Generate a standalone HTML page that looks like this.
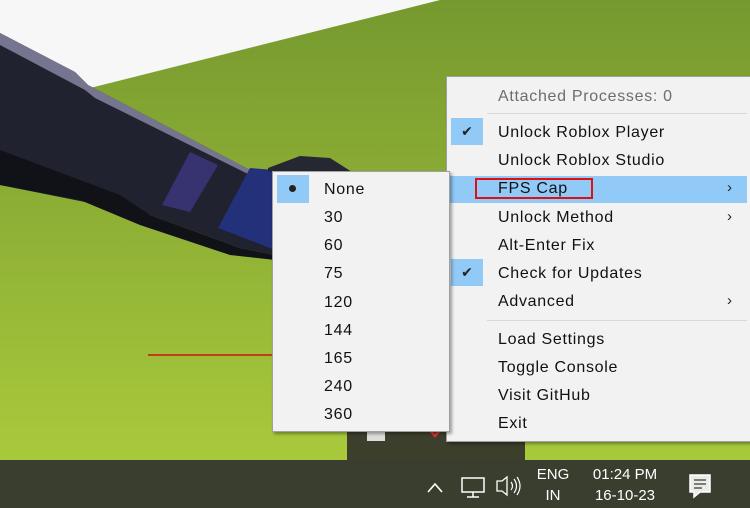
<!DOCTYPE html>
<html><head><style>
body{margin:0;width:750px;height:508px;overflow:hidden;position:relative;font-family:"Liberation Sans","DejaVu Sans",sans-serif;background:#f7f7f7}
.m{position:absolute;background:#f2f2f2;border:1px solid #a0a0a0;box-shadow:2px 2px 3px rgba(0,0,0,.35)}
.i{position:absolute;font-size:16px;letter-spacing:0.7px;color:#111;line-height:18px;margin-top:1px}
.hl{position:absolute;background:#91c9f7}
.sep{position:absolute;height:1px;background:#d8d8d8}
.ck{position:absolute;width:32px;height:27px;background:#91c9f7;color:#222;font-size:14px;text-align:center;line-height:27px}
.ar{position:absolute;font-size:15px;color:#222}
.tb{position:absolute;color:#fff;font-size:15px}
</style></head><body>
<svg width="750" height="508" style="position:absolute;left:0;top:0">
<defs><linearGradient id="g" x1="0" y1="0" x2="0" y2="1"><stop offset="0" stop-color="#76992f"/><stop offset="1" stop-color="#a9c93c"/></linearGradient></defs>
<polygon points="0,130 90,88 440,0 750,0 750,460 0,460" fill="url(#g)"/>
<polygon points="0,33 75,72 88,85 250,170 275,175 275,255 240,248 150,215 0,185" fill="#20222f"/>
<polygon points="0,33 75,72 88,85 250,170 250,175 95,98 85,90 0,45" fill="#757590"/>
<polygon points="0,150 120,195 150,215 240,248 275,255 275,260 230,255 140,225 80,200 0,185" fill="#111118"/>
<polygon points="190,152 218,165 190,212 162,205" fill="#363370"/>
<polygon points="250,168 275,170 275,250 218,228" fill="#23307a"/>
<polygon points="268,168 300,156 330,158 352,172 268,172" fill="#252733"/>
<rect x="347" y="425" width="178" height="35" fill="#3c3f2c"/>
<rect x="0" y="460" width="750" height="48" fill="#3a3e2e"/>
<rect x="367" y="427" width="18" height="14" fill="#ddd"/>
<path d="M428 428 L435 436 L442 428" stroke="#d33" stroke-width="2.5" fill="none"/>
<line x1="148" y1="355" x2="288" y2="355" stroke="#d01010" stroke-width="1.5"/>
<polygon points="286,351 295,355 286,359" fill="#d01010"/>
<path d="M428 492 L435 484 L442 492" stroke="#fff" stroke-width="1.6" fill="none"/>
<rect x="462" y="478" width="22" height="14" stroke="#fff" stroke-width="1.5" fill="none"/>
<line x1="473" y1="492" x2="473" y2="497" stroke="#fff" stroke-width="1.5"/><line x1="467" y1="497" x2="479" y2="497" stroke="#fff" stroke-width="1.5"/>
<path d="M497 481 L502 481 L507 477 L507 495 L502 491 L497 491Z" stroke="#fff" stroke-width="1.3" fill="none"/>
<path d="M511 482 Q514 486 511 490 M514 479 Q519 486 514 493 M517 477 Q523 486 517 495" stroke="#fff" stroke-width="1.2" fill="none"/>
<path d="M690 475 H710 V492 H700 L694 497 V492 H690Z" stroke="#fff" stroke-width="1.5" fill="#fff" fill-opacity="0.9"/>
<path d="M694 480 H706 M694 484 H706 M694 488 H702" stroke="#3a3e2e" stroke-width="1.2"/>
</svg>
<div class="tb" style="left:533px;top:464px;width:40px;text-align:center;line-height:21px">ENG<br>IN</div>
<div class="tb" style="left:583px;top:464px;width:84px;text-align:center;line-height:21px">01:24 PM<br>16-10-23</div>

<div class="m" style="left:446px;top:76px;width:304px;height:364px">
<div class="i" style="left:51px;top:10px;color:#6d6d6d">Attached Processes: 0</div>
<div class="sep" style="left:40px;right:4px;top:36px"></div>
<div class="ck" style="left:4px;top:41px">✔</div>
<div class="i" style="left:51px;top:46px">Unlock Roblox Player</div>
<div class="i" style="left:51px;top:74px">Unlock Roblox Studio</div>
<div class="hl" style="left:0;top:99px;width:300px;height:27px"></div>
<div style="position:absolute;left:28px;top:101px;width:118px;height:21px;border:2px solid #e01010;box-sizing:border-box"></div>
<div class="i" style="left:51px;top:102px">FPS Cap</div><div class="ar" style="left:280px;top:102px">›</div>
<div class="i" style="left:51px;top:131px">Unlock Method</div><div class="ar" style="left:280px;top:131px">›</div>
<div class="i" style="left:51px;top:159px">Alt-Enter Fix</div>
<div class="ck" style="left:4px;top:182px">✔</div>
<div class="i" style="left:51px;top:187px">Check for Updates</div>
<div class="i" style="left:51px;top:215px">Advanced</div><div class="ar" style="left:280px;top:215px">›</div>
<div class="sep" style="left:40px;right:4px;top:243px"></div>
<div class="i" style="left:51px;top:253px">Load Settings</div>
<div class="i" style="left:51px;top:281px">Toggle Console</div>
<div class="i" style="left:51px;top:309px">Visit GitHub</div>
<div class="i" style="left:51px;top:337px">Exit</div>
</div>

<div class="m" style="left:272px;top:171px;width:176px;height:259px">
<div class="hl" style="left:4px;top:3px;width:32px;height:28px"></div>
<div style="position:absolute;left:16px;top:13px;width:7px;height:7px;border-radius:50%;background:#222"></div>
<div class="i" style="left:51px;top:8px">None</div>
<div class="i" style="left:51px;top:36px">30</div>
<div class="i" style="left:51px;top:64px">60</div>
<div class="i" style="left:51px;top:92px">75</div>
<div class="i" style="left:51px;top:121px">120</div>
<div class="i" style="left:51px;top:149px">144</div>
<div class="i" style="left:51px;top:177px">165</div>
<div class="i" style="left:51px;top:205px">240</div>
<div class="i" style="left:51px;top:233px">360</div>
</div>
</body></html>
